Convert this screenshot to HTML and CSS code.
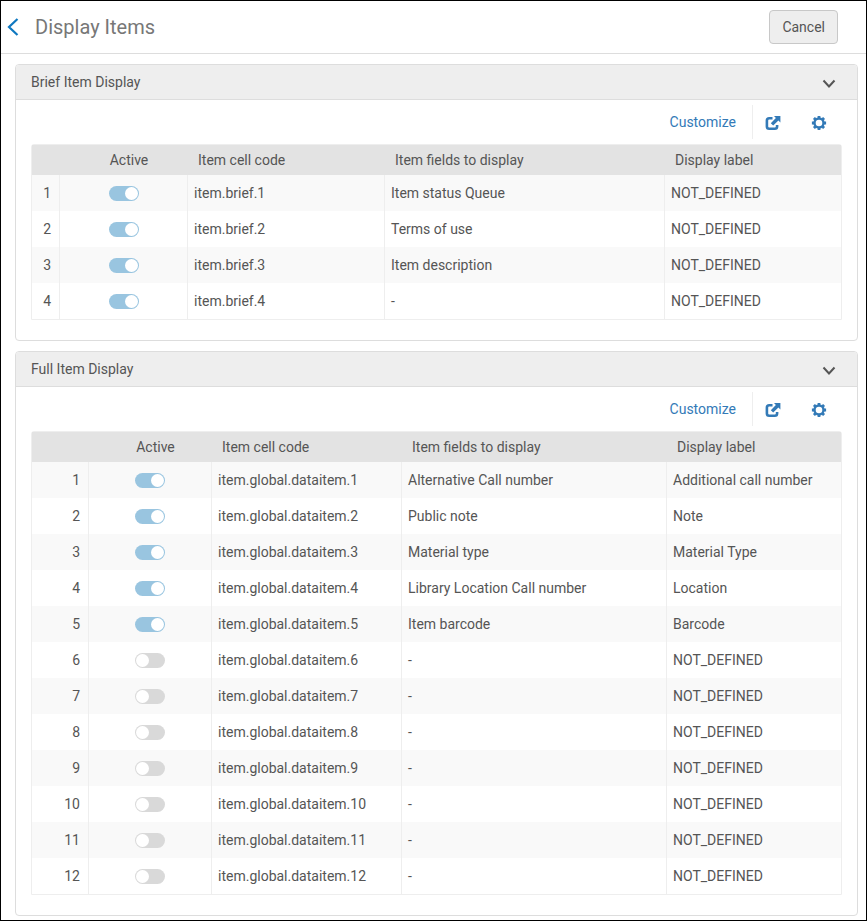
FILE: index.html
```html
<!DOCTYPE html>
<html lang="en">
<head>
  <meta charset="UTF-8">
  <meta name="viewport" content="width=device-width, initial-scale=1">
  <title>Display Items</title>
  <link rel="stylesheet" href="styles.css">
</head>
<body>
  <!-- shared icons -->
  <svg class="sprite" aria-hidden="true">
    <symbol id="icon-down" viewBox="0 0 14 10">
      <path d="M1.5 1.5 L7 7.5 L12.5 1.5" fill="none" stroke="currentColor" stroke-width="2"/>
    </symbol>
    <symbol id="icon-export" viewBox="0 0 16 16">
      <path d="M7.5 3.2 H4.2 Q1.9 3.2 1.9 5.5 V11.5 Q1.9 13.8 4.2 13.8 H9.8 Q12.1 13.8 12.1 11.5 V10" fill="none" stroke="currentColor" stroke-width="2.6"/>
      <path d="M9 1 H15.4 V7.4 L13.4 5.5 L8.2 10.6 L5.8 8.2 L10.9 3 Z" fill="currentColor"/>
    </symbol>
    <symbol id="icon-gear" viewBox="0 0 16 16">
      <circle cx="8" cy="8" r="4.5" fill="none" stroke="currentColor" stroke-width="2.4"/>
      <path d="M8 0.9 V3 M8 13 V15.1 M0.9 8 H3 M13 8 H15.1 M2.9 2.9 L4.6 4.6 M11.4 11.4 L13.1 13.1 M13.1 2.9 L11.4 4.6 M4.6 11.4 L2.9 13.1" fill="none" stroke="currentColor" stroke-width="2.8"/>
    </symbol>
  </svg>

  <header class="page-header">
    <a href="#" class="back" aria-label="Back">
      <svg width="12" height="18" viewBox="0 0 12 18"><path d="M10.5 1 L2 9 L10.5 17" fill="none" stroke="currentColor" stroke-width="2.2"/></svg>
    </a>
    <h1>Display Items</h1>
    <button type="button" class="btn">Cancel</button>
  </header>

  <main>
    <section class="panel">
      <div class="panel-header">
        <h2>Brief Item Display</h2>
        <button type="button" class="collapse" aria-label="Collapse"><svg width="14" height="10"><use href="#icon-down"/></svg></button>
      </div>
      <div class="panel-body">
        <div class="toolbar">
          <a href="#" class="customize">Customize</a>
          <button type="button" class="tool export" aria-label="Export"><svg width="16" height="16"><use href="#icon-export"/></svg></button>
          <button type="button" class="tool settings" aria-label="Settings"><svg width="16" height="16"><use href="#icon-gear"/></svg></button>
        </div>
        <table class="brief">
          <thead>
            <tr>
              <th class="num"></th>
              <th class="active">Active</th>
              <th class="code">Item cell code</th>
              <th class="fields">Item fields to display</th>
              <th>Display label</th>
            </tr>
          </thead>
          <tbody>
            <tr>
              <td class="num">1</td>
              <td class="active"><input type="checkbox" aria-label="item.brief.1 active" checked></td>
              <td>item.brief.1</td>
              <td>Item status Queue</td>
              <td>NOT_DEFINED</td>
            </tr>
            <tr>
              <td class="num">2</td>
              <td class="active"><input type="checkbox" aria-label="item.brief.2 active" checked></td>
              <td>item.brief.2</td>
              <td>Terms of use</td>
              <td>NOT_DEFINED</td>
            </tr>
            <tr>
              <td class="num">3</td>
              <td class="active"><input type="checkbox" aria-label="item.brief.3 active" checked></td>
              <td>item.brief.3</td>
              <td>Item description</td>
              <td>NOT_DEFINED</td>
            </tr>
            <tr>
              <td class="num">4</td>
              <td class="active"><input type="checkbox" aria-label="item.brief.4 active" checked></td>
              <td>item.brief.4</td>
              <td>-</td>
              <td>NOT_DEFINED</td>
            </tr>
          </tbody>
        </table>
      </div>
    </section>

    <section class="panel">
      <div class="panel-header">
        <h2>Full Item Display</h2>
        <button type="button" class="collapse" aria-label="Collapse"><svg width="14" height="10"><use href="#icon-down"/></svg></button>
      </div>
      <div class="panel-body">
        <div class="toolbar">
          <a href="#" class="customize">Customize</a>
          <button type="button" class="tool export" aria-label="Export"><svg width="16" height="16"><use href="#icon-export"/></svg></button>
          <button type="button" class="tool settings" aria-label="Settings"><svg width="16" height="16"><use href="#icon-gear"/></svg></button>
        </div>
        <table class="full">
          <thead>
            <tr>
              <th class="num"></th>
              <th class="active">Active</th>
              <th class="code">Item cell code</th>
              <th class="fields">Item fields to display</th>
              <th>Display label</th>
            </tr>
          </thead>
          <tbody>
            <tr>
              <td class="num">1</td>
              <td class="active"><input type="checkbox" aria-label="item.global.dataitem.1 active" checked></td>
              <td>item.global.dataitem.1</td>
              <td>Alternative Call number</td>
              <td>Additional call number</td>
            </tr>
            <tr>
              <td class="num">2</td>
              <td class="active"><input type="checkbox" aria-label="item.global.dataitem.2 active" checked></td>
              <td>item.global.dataitem.2</td>
              <td>Public note</td>
              <td>Note</td>
            </tr>
            <tr>
              <td class="num">3</td>
              <td class="active"><input type="checkbox" aria-label="item.global.dataitem.3 active" checked></td>
              <td>item.global.dataitem.3</td>
              <td>Material type</td>
              <td>Material Type</td>
            </tr>
            <tr>
              <td class="num">4</td>
              <td class="active"><input type="checkbox" aria-label="item.global.dataitem.4 active" checked></td>
              <td>item.global.dataitem.4</td>
              <td>Library Location Call number</td>
              <td>Location</td>
            </tr>
            <tr>
              <td class="num">5</td>
              <td class="active"><input type="checkbox" aria-label="item.global.dataitem.5 active" checked></td>
              <td>item.global.dataitem.5</td>
              <td>Item barcode</td>
              <td>Barcode</td>
            </tr>
            <tr>
              <td class="num">6</td>
              <td class="active"><input type="checkbox" aria-label="item.global.dataitem.6 active"></td>
              <td>item.global.dataitem.6</td>
              <td>-</td>
              <td>NOT_DEFINED</td>
            </tr>
            <tr>
              <td class="num">7</td>
              <td class="active"><input type="checkbox" aria-label="item.global.dataitem.7 active"></td>
              <td>item.global.dataitem.7</td>
              <td>-</td>
              <td>NOT_DEFINED</td>
            </tr>
            <tr>
              <td class="num">8</td>
              <td class="active"><input type="checkbox" aria-label="item.global.dataitem.8 active"></td>
              <td>item.global.dataitem.8</td>
              <td>-</td>
              <td>NOT_DEFINED</td>
            </tr>
            <tr>
              <td class="num">9</td>
              <td class="active"><input type="checkbox" aria-label="item.global.dataitem.9 active"></td>
              <td>item.global.dataitem.9</td>
              <td>-</td>
              <td>NOT_DEFINED</td>
            </tr>
            <tr>
              <td class="num">10</td>
              <td class="active"><input type="checkbox" aria-label="item.global.dataitem.10 active"></td>
              <td>item.global.dataitem.10</td>
              <td>-</td>
              <td>NOT_DEFINED</td>
            </tr>
            <tr>
              <td class="num">11</td>
              <td class="active"><input type="checkbox" aria-label="item.global.dataitem.11 active"></td>
              <td>item.global.dataitem.11</td>
              <td>-</td>
              <td>NOT_DEFINED</td>
            </tr>
            <tr>
              <td class="num">12</td>
              <td class="active"><input type="checkbox" aria-label="item.global.dataitem.12 active"></td>
              <td>item.global.dataitem.12</td>
              <td>-</td>
              <td>NOT_DEFINED</td>
            </tr>
          </tbody>
        </table>
      </div>
    </section>
  </main>
</body>
</html>
```
FILE: styles.css
```css
* {
  box-sizing: border-box;
}
body {
  margin: 0;
  min-height: 100vh;
  border: 1px solid #000;
  background-color: #fff;
  color: #555;
  font-family: Roboto, Arial, sans-serif;
  font-size: 14px;
  line-height: 20px;
}
button {
  font: inherit;
  color: inherit;
  cursor: pointer;
}
svg {
  display: block;
}
.sprite {
  display: none;
}

/* Top bar */
.page-header {
  display: flex;
  align-items: center;
  height: 53px;
  padding: 0 28px 1px 6px;
  border-bottom: 1px solid #ddd;
}
.back {
  color: #0f78c0;
}
h1 {
  flex: 1;
  margin: 0 0 0 16px;
  color: #777;
  font-size: 20px;
  font-weight: normal;
}
.btn {
  height: 34px;
  padding: 0 12px;
  border: 1px solid #c8c8c8;
  border-radius: 4px;
  background-color: #eee;
}

/* Panels */
main {
  display: flex;
  flex-direction: column;
  gap: 10px;
  padding: 10px 8px 4px 14px;
}
.panel {
  border: 1px solid #ddd;
  border-radius: 4px;
}
.panel-header {
  display: flex;
  justify-content: space-between;
  align-items: center;
  height: 35px;
  padding: 0 21px 0 15px;
  border-bottom: 1px solid #ddd;
  border-radius: 3px 3px 0 0;
  background-color: #eee;
}
h2 {
  margin: 0;
  font-size: 14px;
  font-weight: normal;
}
.collapse {
  padding: 4px 0 0;
  border: none;
  background: none;
}
.panel-body {
  padding: 5px 15px 20px;
}

/* Toolbar above each table */
.toolbar {
  display: flex;
  justify-content: flex-end;
  align-items: center;
  height: 34px;
  margin-bottom: 5px;
}
.customize {
  margin-right: 16px;
  color: #337ab7;
  text-decoration: none;
}
.tool {
  display: flex;
  align-items: center;
  height: 34px;
  padding: 2px 0 0;
  border: none;
  background: none;
  color: #337ab7;
}
.export {
  width: 43px;
  padding-left: 12px;
  border-left: 1px solid #eee;
}
.settings {
  justify-content: center;
  width: 47px;
}

/* Tables */
table {
  width: 100%;
  table-layout: fixed;
  border: 1px solid #eee;
  border-spacing: 0;
  border-radius: 3px 3px 0 0;
}
th {
  height: 30px;
  padding: 0 0 0 10px;
  background-color: #e3e3e3;
  font-weight: normal;
  text-align: left;
}
td {
  height: 36px;
  padding: 0 6px;
  border-right: 1px solid #eee;
}
td:last-child {
  border-right: none;
}
tbody tr:nth-child(odd) {
  background-color: #f9f9f9;
}
td.num {
  padding: 0 8px 0 0;
  text-align: right;
}
.active {
  text-align: center;
}
.brief .num {
  width: 28px;
}
.brief .active {
  width: 128px;
}
.brief .code {
  width: 197px;
}
.brief .fields {
  width: 280px;
}
.full .num {
  width: 57px;
}
.full .active {
  width: 123px;
}
.full .code {
  width: 190px;
}
.full .fields {
  width: 265px;
}

/* Toggle switch */
input[type="checkbox"] {
  appearance: none;
  display: block;
  width: 30px;
  height: 15px;
  margin: 0 auto;
  padding: 1px;
  border-radius: 8px;
  background-color: #d9d9d9;
  cursor: pointer;
}
input[type="checkbox"]::before {
  content: "";
  display: block;
  width: 13px;
  height: 13px;
  border-radius: 50%;
  background-color: #fff;
}
input[type="checkbox"]:checked {
  background-color: #99c5e0;
}
input[type="checkbox"]:checked::before {
  margin-left: auto;
}
```
